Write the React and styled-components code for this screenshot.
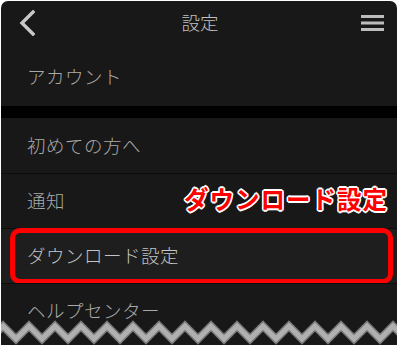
import React from "react";
import styled, { createGlobalStyle } from "styled-components";

const Global = createGlobalStyle`
  html, body { margin: 0; padding: 0; background: #ffffff; }
  body { font-family: "Noto Sans CJK JP", "Noto Sans", sans-serif; }
`;

const Panel = styled.div`
  position: relative;
  margin: 1px 0 0 1px;
  width: 396px;
  height: 344px;
  background: #181818;
  border-radius: 7px 7px 0 0;
  overflow: hidden;
  display: flex;
  flex-direction: column;
`;

const Header = styled.div`
  height: 47px;
  display: flex;
  align-items: center;
  justify-content: space-between;
  padding: 0 12px 0 14px;
  flex-shrink: 0;
`;

const Title = styled.div`
  font-size: 18.5px;
  font-weight: 300;
  color: #c2c2c2;
  line-height: 1;
  margin-top: -4px;
`;

const IconBox = styled.div`
  width: 24px;
  height: 26px;
  display: flex;
  align-items: center;
  justify-content: center;
  margin-top: -4px;
`;

const Row = styled.div`
  position: relative;
  height: ${(p) => p.$h || 55}px;
  flex-shrink: 0;
  display: flex;
  align-items: center;
  justify-content: space-between;
  padding: 0 9px 0 26px;
  box-sizing: border-box;
  background: ${(p) => (p.$active ? "#1e1e1e" : "#181818")};
  border-top: ${(p) => (p.$divider ? "1px solid #0c0c0c" : "none")};
`;

const Label = styled.span`
  font-size: 18.5px;
  font-weight: 300;
  color: ${(p) => (p.$bright ? "#c4c4c4" : "#a9a9a9")};
  letter-spacing: 0.5px;
  margin-top: -2px;
`;

const Gap = styled.div`
  height: 12px;
  background: #000;
  flex-shrink: 0;
`;

const Callout = styled.span`
  font-size: 24.5px;
  font-weight: 700;
  color: #ff0000;
  letter-spacing: 1px;
  margin-top: -6px;
  text-shadow:
    1.6px 0 0 #fff, -1.6px 0 0 #fff, 0 1.6px 0 #fff, 0 -1.6px 0 #fff,
    1.2px 1.2px 0 #fff, -1.2px 1.2px 0 #fff, 1.2px -1.2px 0 #fff, -1.2px -1.2px 0 #fff;
`;

const Highlight = styled.div`
  position: absolute;
  left: 9px;
  right: 4px;
  top: -1px;
  bottom: -1px;
  border: 5.5px solid #ff0000;
  border-radius: 10px;
  pointer-events: none;
`;

const Tear = styled.svg`
  position: absolute;
  left: 0;
  bottom: 0;
  display: block;
`;

function zigzag() {
  const pts = [];
  const period = 26;
  for (let i = -1; i < 18; i++) {
    const x = i * period + 2;
    pts.push(`${x},${7}`);
    pts.push(`${x + period / 2},${20}`);
  }
  return pts.join(" ");
}

export default function App() {
  const z = zigzag();
  return (
    <>
      <Global />
      <Panel>
        <Header>
          <IconBox>
            <svg width="16" height="26" viewBox="0 0 16 26">
              <polyline points="14,2 3,13 14,24" fill="none" stroke="#c8c8c8" strokeWidth="3.4" strokeLinecap="square" />
            </svg>
          </IconBox>
          <Title>設定</Title>
          <IconBox>
            <svg width="23" height="18" viewBox="0 0 23 18">
              <rect x="0" y="1" width="23" height="3" fill="#bdbdbd" />
              <rect x="0" y="7.5" width="23" height="3" fill="#bdbdbd" />
              <rect x="0" y="14" width="23" height="3" fill="#bdbdbd" />
            </svg>
          </IconBox>
        </Header>
        <Row $h={58}>
          <Label>アカウント</Label>
        </Row>
        <Gap />
        <Row>
          <Label>初めての方へ</Label>
        </Row>
        <Row $divider>
          <Label>通知</Label>
          <Callout>ダウンロード設定</Callout>
        </Row>
        <Row $divider $active>
          <Label $bright>ダウンロード設定</Label>
          <Highlight />
        </Row>
        <Row $divider>
          <Label>ヘルプセンター</Label>
        </Row>
        <Tear width="396" height="26" viewBox="0 0 396 26">
          <polyline points={z} fill="none" stroke="#7a7a7a" strokeWidth="8" strokeLinejoin="miter" />
          <polyline points={z} fill="none" stroke="#b0b0b0" strokeWidth="5" strokeLinejoin="miter" />
        </Tear>
      </Panel>
    </>
  );
}
